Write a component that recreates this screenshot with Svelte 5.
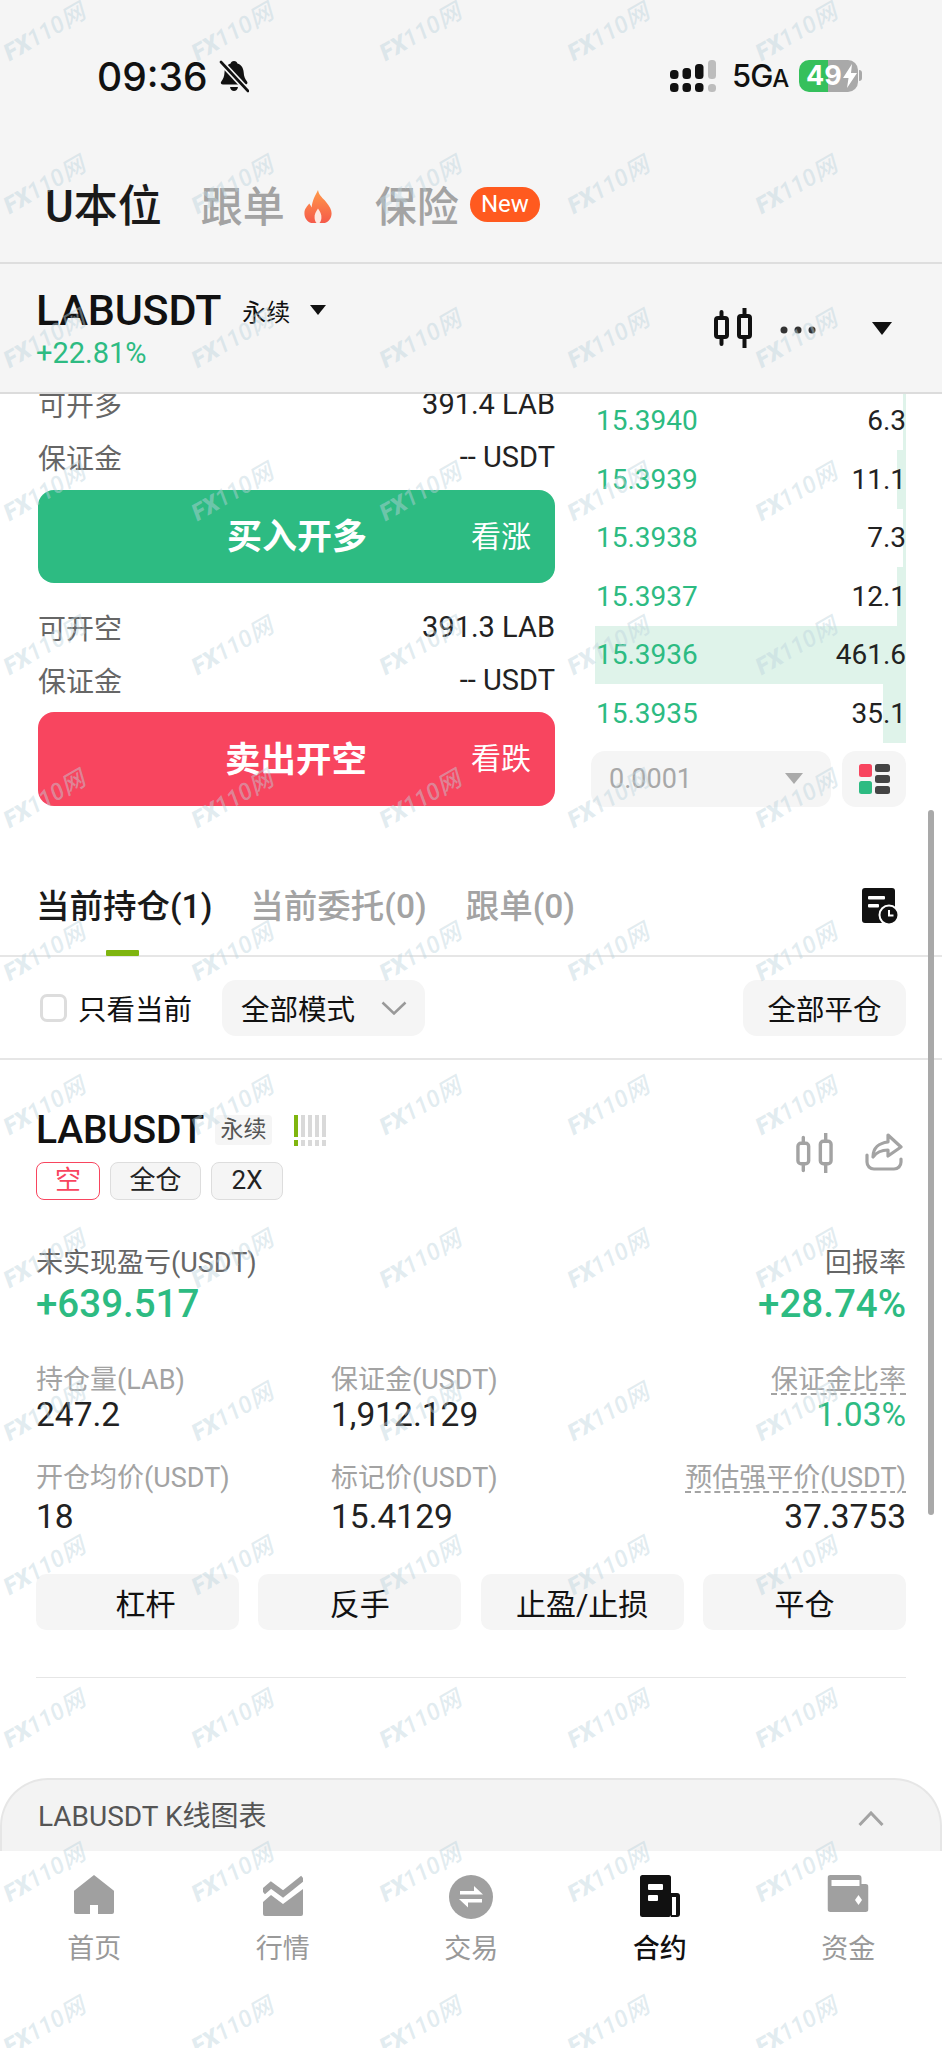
<script>
  const book = [
    { price: '15.3940', qty: '6.3', depth: 1 },
    { price: '15.3939', qty: '11.1', depth: 3 },
    { price: '15.3938', qty: '7.3', depth: 1 },
    { price: '15.3937', qty: '12.1', depth: 3 },
    { price: '15.3936', qty: '461.6', depth: 100 },
    { price: '15.3935', qty: '35.1', depth: 7.5 }
  ];
  const actions = ['杠杆', '反手', '止盈/止损', '平仓'];
  const marks = Array.from({ length: 70 });
</script>

<div class="page">
  <header class="top">
    <div class="status">
      <div class="time">
        <span>09:36</span>
        <svg class="bell" viewBox="0 0 30 33" width="30" height="33">
          <path d="M15 1c2 0 3 1 3.400 2.500 4 1.300 6 4.500 6.300 9 .2 4 1.300 6.500 3.300 9 1 1.500 .3 3-1.500 3H4c-2 0-2.800-1.600-1.700-3 2-2.700 3-5 3.200-9 .2-4.500 2.500-7.700 6.100-9C12 2 13 1 15 1z" fill="#111"/>
          <path d="M11 27h8c-.4 2.500-2 4-4 4s-3.600-1.500-4-4z" fill="#111"/>
          <path d="M1 1l28 30" stroke="#f5f5f5" stroke-width="6"/>
          <path d="M2 2l27 29" stroke="#111" stroke-width="2.600" stroke-linecap="round"/>
        </svg>
      </div>
      <div class="sys">
        <svg viewBox="0 0 46 32" width="46" height="32">
          <g fill="#111">
            <rect x="0" y="10" width="8.500" height="9" rx="3.500"/>
            <rect x="12.500" y="8" width="8.500" height="11" rx="3.500"/>
            <rect x="25" y="4" width="8.500" height="15" rx="3.500"/>
            <rect x="0" y="23" width="8.500" height="9" rx="3.500"/>
            <rect x="12.500" y="23" width="8.500" height="9" rx="3.500"/>
            <rect x="25" y="23" width="8.500" height="9" rx="3.500"/>
          </g>
          <g fill="#bdbdbd">
            <rect x="38" y="0" width="8" height="19" rx="3.500"/>
            <rect x="38" y="24" width="8" height="8" rx="3.500"/>
          </g>
        </svg>
        <span class="net">5G<small>A</small></span>
        <div class="battery">
          <span class="level">49</span>
          <svg class="bolt" viewBox="0 0 14 24" width="14" height="24"><path d="M9 0L0 14h5.500L4 24l10-15H8z" fill="#fff"/></svg>
        </div>
        <i class="nub"></i>
      </div>
    </div>

    <nav class="maintabs">
      <span class="mt active">U本位</span>
      <span class="mt">跟单</span>
      <svg class="flame" viewBox="0 0 30 34" width="30" height="33">
        <defs>
          <linearGradient id="fl" x1="0" y1="0" x2="0" y2="1">
            <stop offset="0" stop-color="#ff9a4a"/>
            <stop offset="1" stop-color="#f55a4a"/>
          </linearGradient>
        </defs>
        <path d="M15 0c1 6 5 8 8.500 12.500C27 17 29 20 29 24c0 5-3 9-7 10h-14c-4-1-7-5-7-10 0-5 3-7 5-10 1 1.500 1.800 3 2.500 4C9 11 12 6 15 0z" fill="url(#fl)"/>
        <path d="M15 19c2 3 4 6 3.500 10-.2 2-1 4-2 5h-3c-1-1-1.800-3-2-5-.5-4 1.500-7 3.500-10z" fill="#fde9e2"/>
      </svg>
      <span class="mt third">保险</span>
      <span class="new">New</span>
    </nav>

    <div class="symbar">
      <div class="sym">
        <div class="symline">
          <span class="symname">LABUSDT</span>
          <span class="perp">永续</span>
          <i class="tri small"></i>
        </div>
        <div class="change">+22.81%</div>
      </div>
      <div class="symtools">
        <svg viewBox="0 0 38 40" width="38" height="40" fill="none" stroke="#111" stroke-width="4">
          <rect x="2" y="10" width="11" height="19" rx="2"/>
          <rect x="25" y="8" width="11" height="21" rx="2"/>
          <path d="M7.500 4v6M7.500 29v7M30.500 0v8M30.500 29v11" stroke-linecap="round"/>
        </svg>
        <svg class="dots" viewBox="0 0 36 8" width="36" height="8" fill="#333">
          <circle cx="4" cy="4" r="3.500"/><circle cx="18" cy="4" r="3.500"/><circle cx="32" cy="4" r="3.500"/>
        </svg>
        <i class="tri large"></i>
      </div>
    </div>
  </header>

  <section class="trade">
    <div class="order">
      <div class="kv clipped"><span>可开多</span><b>391.4 LAB</b></div>
      <div class="kv"><span>保证金</span><b>-- USDT</b></div>
      <button class="cta buy"><strong>买入开多</strong><em>看涨</em></button>
      <div class="kv second"><span>可开空</span><b>391.3 LAB</b></div>
      <div class="kv"><span>保证金</span><b>-- USDT</b></div>
      <button class="cta sell"><strong>卖出开空</strong><em>看跌</em></button>
    </div>
    <div class="book">
      <div class="rows">
        {#each book as row}
          <div class="row">
            <i class="depth" style="width: {row.depth}%"></i>
            <span class="price">{row.price}</span>
            <span class="qty">{row.qty}</span>
          </div>
        {/each}
      </div>
      <div class="bookctl">
        <div class="precision">
          <span>0.0001</span>
          <i class="tri mini"></i>
        </div>
        <div class="viewbtn">
          <svg viewBox="0 0 31 30" width="31" height="30">
            <rect x="0" y="0" width="13" height="13" rx="2.500" fill="#f8455f"/>
            <rect x="0" y="17" width="13" height="13" rx="2.500" fill="#2dbb82"/>
            <rect x="16" y="0" width="15" height="8" rx="2.500" fill="#444"/>
            <rect x="16" y="11" width="15" height="8" rx="2.500" fill="#444"/>
            <rect x="16" y="22" width="15" height="8" rx="2.500" fill="#444"/>
          </svg>
        </div>
      </div>
    </div>
  </section>

  <nav class="postabs">
    <span class="pt active">当前持仓(1)</span>
    <span class="pt">当前委托(0)</span>
    <span class="pt">跟单(0)</span>
    <svg class="hist" viewBox="0 0 36 36" width="36" height="36">
      <rect x="0" y="0" width="33" height="35" rx="3" fill="#111"/>
      <rect x="6" y="8" width="17" height="3.500" rx="1" fill="#fff"/>
      <rect x="6" y="16" width="11" height="3.500" rx="1" fill="#fff"/>
      <circle cx="27" cy="27" r="9.500" fill="#111" stroke="#fff" stroke-width="2"/>
      <path d="M27 22v5.500h4.500" stroke="#fff" stroke-width="2" fill="none"/>
    </svg>
  </nav>

  <div class="filters">
    <i class="check"></i>
    <span class="only">只看当前</span>
    <div class="mode">
      <span>全部模式</span>
      <svg viewBox="0 0 26 14" width="26" height="14" fill="none" stroke="#999" stroke-width="2.500"><path d="M1.500 1.500L13 12.500 24.500 1.500"/></svg>
    </div>
    <button class="closeall">全部平仓</button>
  </div>

  <article class="position">
    <div class="poshead">
      <div>
        <div class="posline">
          <span class="posname">LABUSDT</span>
          <span class="posperp">永续</span>
          <div class="risk">
            {#each [0, 1, 2, 3, 4] as i}
              <div class="riskcol" class:on={i === 0}><i></i><i></i></div>
            {/each}
          </div>
        </div>
        <div class="tags">
          <span class="tag short">空</span>
          <span class="tag wide">全仓</span>
          <span class="tag">2X</span>
        </div>
      </div>
      <div class="posicons">
        <svg viewBox="0 0 38 40" width="37" height="40" fill="none" stroke="#a3a3a3" stroke-width="3.500">
          <rect x="2" y="10" width="11" height="21" rx="3"/>
          <rect x="25" y="8" width="11" height="23" rx="3"/>
          <path d="M7.500 4v6M7.500 31v7M30.500 0v8M30.500 31v9" stroke-linecap="round"/>
        </svg>
        <svg viewBox="0 0 38 38" width="38" height="38" fill="none" stroke="#a3a3a3" stroke-width="3.200" stroke-linejoin="round" stroke-linecap="round">
          <path d="M23 2l13 12-13 9v-6c-7 0-12 3-15 7 0-9 6-14 15-15z"/>
          <path d="M2 22v7c0 4 3 7 7 7h20c4 0 7-3 7-7v-3"/>
        </svg>
      </div>
    </div>

    <div class="pnl">
      <div>
        <div class="pnllabel">未实现盈亏(USDT)</div>
        <div class="pnlvalue">+639.517</div>
      </div>
      <div class="right">
        <div class="pnllabel">回报率</div>
        <div class="pnlvalue">+28.74%</div>
      </div>
    </div>

    <div class="stats">
      <div><div class="sl">持仓量(LAB)</div><div class="sv">247.2</div></div>
      <div><div class="sl">保证金(USDT)</div><div class="sv">1,912.129</div></div>
      <div class="right"><div class="sl"><u>保证金比率</u></div><div class="sv green">1.03%</div></div>
      <div class="r2"><div class="sl">开仓均价(USDT)</div><div class="sv">18</div></div>
      <div class="r2"><div class="sl">标记价(USDT)</div><div class="sv">15.4129</div></div>
      <div class="r2 right"><div class="sl"><u>预估强平价(USDT)</u></div><div class="sv">37.3753</div></div>
    </div>

    <div class="actions">
      {#each actions as a}
        <button class="act">{a}</button>
      {/each}
    </div>
    <hr />
  </article>

  <div class="kpanel">
    <span>LABUSDT K线图表</span>
    <svg viewBox="0 0 26 15" width="26" height="15" fill="none" stroke="#a3a3a3" stroke-width="3"><path d="M1.500 14L13 2l11.500 12"/></svg>
  </div>

  <footer class="tabbar">
    <div class="tab">
      <svg viewBox="0 0 40 40" width="40" height="40"><path d="M20 0L39 15a2 2 0 0 1 1 2v20a2 2 0 0 1-2 2H24V30h-8v9H2a2 2 0 0 1-2-2V17a2 2 0 0 1 1-2z" fill="#a0a0a0"/></svg>
      <span>首页</span>
    </div>
    <div class="tab">
      <svg viewBox="0 0 40 41" width="40" height="41">
        <path d="M0 27l8-7 12 9L40 14v25a2 2 0 0 1-2 2H2a2 2 0 0 1-2-2z" fill="#a0a0a0"/>
        <path d="M0 17l8-7 12 9L40 3" fill="none" stroke="#a0a0a0" stroke-width="6"/>
      </svg>
      <span>行情</span>
    </div>
    <div class="tab">
      <svg viewBox="0 0 44 44" width="44" height="44">
        <circle cx="22" cy="22" r="22" fill="#a0a0a0"/>
        <path d="M11 19.500V16h14v-5l9 8.500z" fill="#fff"/>
        <path d="M33 24v3.500H19v5l-9-8.500z" fill="#fff"/>
      </svg>
      <span>交易</span>
    </div>
    <div class="tab active">
      <svg viewBox="0 0 40 42" width="40" height="42"><rect x="0" y="0" width="31" height="42" rx="2.500" fill="#111"/><path d="M31 18h6a3 3 0 0 1 3 3v18a3 3 0 0 1-3 3h-6z" fill="#111"/><rect x="32" y="22" width="4" height="18" fill="#fff"/><rect x="8" y="9" width="15" height="6" rx="1" fill="#fff"/><rect x="8" y="20" width="10" height="6" rx="1" fill="#fff"/></svg>
      <span>合约</span>
    </div>
    <div class="tab">
      <svg viewBox="0 0 41 37" width="41" height="37"><path d="M3 0h28a3 3 0 0 1 3 3v6h4a3 3 0 0 1 3 3v22a3 3 0 0 1-3 3H3a3 3 0 0 1-3-3V3a3 3 0 0 1 3-3z" fill="#a0a0a0"/><rect x="4" y="5" width="28" height="6" fill="#fff"/><path d="M31 20l3.500 5-3.500 5-3.500-5z" fill="#fff"/></svg>
      <span>资金</span>
    </div>
  </footer>

  <i class="scrollbar"></i>

  <div class="watermarks" aria-hidden="true">
    {#each marks as _}
      <div class="cell"><span><b>FX</b>110网</span></div>
    {/each}
  </div>
</div>

<style>
  :global(body) { margin: 0; background: #fff; }
  .page {
    position: relative;
    width: 942px;
    height: 2048px;
    overflow: hidden;
    background: #fff;
    display: flex;
    flex-direction: column;
    font-family: Roboto, "Noto Sans CJK SC", sans-serif;
    color: #111;
  }
  i { display: block; font-style: normal; }
  button { border: 0; font-family: inherit; padding: 0; }

  .top { background: #f5f5f5; height: 392px; border-bottom: 2px solid #dcdcdc; flex: none; box-sizing: content-box; }
  .status { height: 152px; display: flex; justify-content: space-between; padding: 60px 80px 0 97px; box-sizing: border-box; }
  .time { display: flex; align-items: flex-start; gap: 11px; height: 33px; }
  .time span { font-family: Inter, sans-serif; font-size: 39px; font-weight: 500; line-height: 33px; letter-spacing: 0; }
  .sys { display: flex; align-items: flex-start; height: 32px; }
  .net { font-family: Inter, sans-serif; font-weight: 500; font-size: 31px; line-height: 32px; margin-left: 16px; width: 53px; letter-spacing: -1px; white-space: nowrap; }
  .net small { font-size: 24px; }
  .battery {
    margin-left: 14px; width: 59px; height: 32px; border-radius: 10px;
    background: linear-gradient(90deg, #35c05c 0 50%, #a9a9a9 50% 100%);
    display: flex; align-items: center; padding-left: 7px; box-sizing: border-box; gap: 0;
    color: #fff;
  }
  .level { font-family: Inter, sans-serif; font-weight: 700; font-size: 27px; line-height: 32px; letter-spacing: 0; }
  .bolt { margin-left: 1px; flex: none; }
  .nub { width: 3px; height: 11px; margin: 10px 0 0 1px; background: #a9a9a9; border-radius: 0 3px 3px 0; }

  .maintabs { height: 112px; display: flex; align-items: flex-start; padding: 26px 0 0 45px; box-sizing: border-box; border-bottom: 2px solid #dedede; }
  .mt { font-size: 42px; line-height: 60px; color: #a3a3a3; font-weight: 500; }
  .mt.active { color: #1a1a1a; margin-right: 39px; font-size: 44px; font-weight: 500; margin-top: -1px; }
  .flame { margin: 12px 0 0 18px; }
  .third { margin-left: 42px; }
  .new { margin: 9px 0 0 11px; width: 70px; height: 35px; border-radius: 18px; background: #ff5a1f; color: #fff; font-size: 24px; line-height: 35px; text-align: center; }

  .symbar { height: 126px; display: flex; justify-content: space-between; padding: 0 50px 0 36px; box-sizing: border-box; }
  .symline { display: flex; align-items: center; height: 64px; margin-top: 14px; }
  .symname { font-size: 43px; font-weight: 500; letter-spacing: -.2px; }
  .perp { font-size: 24px; margin-left: 21px; }
  .change { font-size: 29px; line-height: 32px; color: #2dbb82; margin-top: -5px; }
  .tri { width: 0; height: 0; border-style: solid; border-color: #111 transparent transparent; }
  .tri.small { border-width: 10px 8px 0; margin-left: 20px; }
  .tri.large { border-width: 13px 10px 0; }
  .tri.mini { border-width: 11px 9px 0; border-top-color: #aaa; }
  .symtools { display: flex; align-items: center; margin-top: 44px; height: 40px; }
  .dots { margin: 3px 56px 0 28px; }

  .trade { height: 414px; overflow: hidden; display: flex; padding: 0 36px 0 38px; box-sizing: border-box; flex: none; background: #fff; }
  .order { width: 517px; margin-top: -17px; flex: none; }
  .kv { display: flex; justify-content: space-between; height: 53px; align-items: center; font-size: 28px; color: #666; }
  .kv span { font-size: 28px; color: #666; }
  .kv b { font-weight: 400; color: #222; font-size: 29px; }
  .cta {
    width: 100%; height: 93px; border-radius: 16px; color: #fff;
    display: flex; align-items: center; justify-content: flex-end; margin-top: 7px; padding: 0 24px 6px 0; box-sizing: border-box;
  }
  .cta strong { font-size: 35px; font-weight: 700; margin-right: 104px; }
  .cta em { font-style: normal; font-size: 30px; }
  .buy { background: #2dbb82; }
  .sell { background: #f8455f; margin-top: 6px; height: 94px; }
  .sell strong { font-size: 35.500px; }
  .second { margin-top: 17px; }

  .book { flex: 1; margin-left: 40px; min-width: 0; margin-right: 0; }
  .rows { margin-top: -2.500px; height: 351px; }
  .row { position: relative; height: 58.500px; display: flex; justify-content: space-between; align-items: center; font-size: 28px; }
  .depth { position: absolute; top: 0; bottom: 0; right: 0; background: #dff3ea; }
  .price { color: #2dbb82; position: relative; padding-left: 1px; }
  .qty { color: #222; position: relative; }
  .bookctl { display: flex; gap: 11px; margin-top: 8px; margin-left: -4px; }
  .precision { width: 240px; height: 56px; border-radius: 14px; background: #f5f5f5; display: flex; align-items: center; justify-content: space-between; padding: 0 28px 0 18px; box-sizing: border-box; font-size: 27px; color: #a8a8a8; }
  .viewbtn { width: 64px; height: 56px; border-radius: 14px; background: #f5f5f5; display: flex; align-items: center; justify-content: center; }

  .postabs { position: relative; height: 149px; box-sizing: border-box; border-bottom: 2px solid #e6e6e6; display: flex; align-items: flex-start; padding: 75px 0 0 36px; flex: none; }
  .postabs::after { content: ""; position: absolute; left: 106px; bottom: -1px; width: 33px; height: 6px; background: #7fb50f; border-radius: 1px; }
  .pt { font-size: 33.500px; line-height: 48px; color: #a3a3a3; margin-right: 39px; font-weight: 500; }
  .pt.active { color: #1a1a1a; margin-right: 38px; }
  .hist { position: absolute; left: 862px; top: 80px; }

  .filters { height: 103px; display: flex; align-items: center; padding: 0 36px 0 40px; box-sizing: border-box; border-bottom: 2px solid #e6e6e6; flex: none; }
  .check { width: 27px; height: 28px; border: 3px solid #ddd; border-radius: 7px; box-sizing: border-box; }
  .only { font-size: 28.500px; margin-left: 11px; }
  .mode { margin-left: 30px; width: 203px; height: 56px; background: #f5f5f5; border-radius: 14px; display: flex; align-items: center; justify-content: space-between; padding: 0 18px 0 19px; box-sizing: border-box; font-size: 28.500px; }
  .closeall { margin-left: auto; width: 163px; height: 56px; background: #f5f5f5; border-radius: 14px; font-size: 28.500px; color: #111; }

  .position { padding: 50px 36px 0; flex: none; height: 718px; box-sizing: border-box; }
  .poshead { display: flex; justify-content: space-between; align-items: flex-start; height: 92px; }
  .posline { display: flex; align-items: center; height: 40px; }
  .posname { font-size: 39px; font-weight: 500; letter-spacing: -.2px; }
  .posperp { margin-left: 11px; width: 57px; height: 30px; background: #f5f5f5; border-radius: 4px; text-align: center; font-size: 23px; line-height: 30px; color: #555; }
  .risk { margin-left: 22px; display: flex; gap: 2.500px; }
  .riskcol { display: flex; flex-direction: column; gap: 3px; }
  .riskcol i { width: 4.500px; background: #d9d9d9; }
  .riskcol i:first-child { height: 22px; }
  .riskcol i:last-child { height: 6px; }
  .riskcol.on i { background: #7fb50f; }
  .tags { display: flex; gap: 10px; margin-top: 12px; }
  .tag { box-sizing: border-box; width: 72px; height: 38px; border: 1.500px solid #ddd; background: #f5f5f5; border-radius: 8px; text-align: center; font-size: 26px; line-height: 35px; color: #222; }
  .tag.wide { width: 91px; }
  .tag.short { width: 64px; color: #f8455f; border-color: #f8455f; background: #fff; }
  .posicons { display: flex; gap: 32px; margin: 23px 3px 0 0; }

  .pnl { display: flex; justify-content: space-between; margin-top: 43px; }
  .right { text-align: right; }
  .pnllabel { font-size: 27px; line-height: 36px; color: #666; }
  .pnlvalue { font-size: 38.500px; font-weight: 500; line-height: 46px; color: #2dbb82; margin-top: 0; }

  .stats { display: grid; grid-template-columns: 295px 1fr 1fr; margin-top: 35px; }
  .stats .r2 { margin-top: 27px; }
  .sl { font-size: 27px; line-height: 36px; color: #a3a3a3; white-space: nowrap; }
  .sl u { text-decoration: underline dashed #a3a3a3 2px; text-underline-offset: 4px; }
  .sv { font-size: 33.500px; line-height: 36px; color: #222; margin-top: -1px; }
  .stats .r2 .sv { margin-top: 3px; }
  .sv.green { color: #2dbb82; }

  .actions { display: flex; justify-content: space-between; margin-top: 39px; }
  .act { width: 203px; height: 56px; background: #f5f5f5; border-radius: 10px; font-size: 30px; color: #111; }
  .act:first-child { padding-left: 16px; }
  hr { border: 0; border-top: 1.500px solid #e6e6e6; margin: 47px 0 0; }

  .kpanel {
    margin-top: 0;
    flex: 1;
    background: #f3f3f3;
    border: 2px solid #e6e6e6; border-bottom: 0;
    border-radius: 48px 48px 0 0;
    display: flex; justify-content: space-between; align-items: flex-start;
    padding: 14px 56px 0 36px;
    box-sizing: border-box;
    font-size: 28px; color: #555;
  }
  .kpanel svg { margin-top: 17px; }
  .tabbar { height: 197px; background: #fff; display: grid; grid-template-columns: repeat(5, 188.500px); flex: none; }
  .tab { display: flex; flex-direction: column; align-items: center; height: 122px; padding-top: 26px; box-sizing: border-box; color: #999; font-size: 27px; position: relative; }
  .tab svg { position: absolute; top: 24px; left: 50%; transform: translateX(-50%); }
  .tab span { margin-top: 53px; line-height: 38px; }
  .tab.active { color: #111; font-weight: 500; }

  .scrollbar { position: absolute; left: 928px; top: 810px; width: 6px; height: 705px; border-radius: 3px; background: #a9a9a9; }

  .watermarks { position: absolute; left: -49px; top: -44px; display: grid; grid-template-columns: repeat(5, 188px); grid-auto-rows: 153.400px; pointer-events: none; }
  .cell { display: flex; align-items: center; justify-content: center; }
  .cell span {
    display: block; transform: rotate(-30deg); white-space: nowrap;
    font-size: 23.500px; line-height: 1; color: rgba(190, 212, 222, .45);
    font-weight: 500; font-style: italic;
  }
  .cell b { font-weight: 900; }
</style>
